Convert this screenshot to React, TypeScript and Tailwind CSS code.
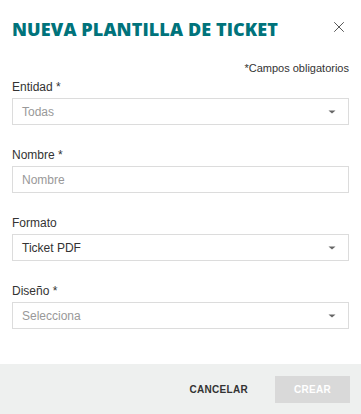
import { X } from 'lucide-react';

function Caret() {
  return (
    <svg width="8" height="4" viewBox="0 0 8 4" className="shrink-0">
      <path d="M0.5 0.5h7L4 3.5z" fill="#666" />
    </svg>
  );
}

function Field({
  label,
  value,
  placeholder,
  select,
}: {
  label: string;
  value?: string;
  placeholder?: string;
  select?: boolean;
}) {
  return (
    <div className="flex flex-col">
      <label className="text-[12px] leading-[16px] text-[#333]">{label}</label>
      <div className="mt-[3px] flex h-[27px] items-center justify-between border border-[#dcdcdc] bg-white pl-[9px] pr-[12px]">
        <span className={value ? 'text-[12px] text-[#333]' : 'text-[12px] text-[#999]'}>
          {value ?? placeholder}
        </span>
        {select && <Caret />}
      </div>
    </div>
  );
}

export default function App() {
  return (
    <div
      className="flex h-[414px] w-[361px] flex-col bg-white"
      style={{ fontFamily: '"Liberation Sans", Arial, sans-serif' }}
    >
      <div className="flex-1 px-[12px]">
        <div className="flex items-center justify-between pt-[19px]">
          <h2
            className="text-[18px] font-extrabold leading-[20px] tracking-[0.1px] text-[#00737b]"
            style={{ fontFamily: '"Open Sans", sans-serif' }}
          >
            NUEVA PLANTILLA DE TICKET
          </h2>
          <X className="-mt-[6px] -mb-[1px] mr-[1px] h-[18px] w-[18px] text-[#333]" strokeWidth={1.1} />
        </div>
        <p className="mt-[22px] text-right text-[11px] leading-[14px] text-[#333]">*Campos obligatorios</p>
        <div className="mt-[4px] flex flex-col gap-[22px]">
          <Field label="Entidad *" placeholder="Todas" select />
          <Field label="Nombre *" placeholder="Nombre" />
          <Field label="Formato" value="Ticket PDF" select />
          <Field label="Diseño *" placeholder="Selecciona" select />
        </div>
      </div>
      <div className="flex h-[50px] items-center justify-end gap-[27px] bg-[#eef0ef] px-[11px]">
        <button className="text-[10px] font-bold tracking-[0.3px] text-[#333]">CANCELAR</button>
        <button className="h-[27px] w-[75px] bg-[#d9d9d9] text-[10px] font-bold tracking-[0.3px] text-white">
          CREAR
        </button>
      </div>
    </div>
  );
}
